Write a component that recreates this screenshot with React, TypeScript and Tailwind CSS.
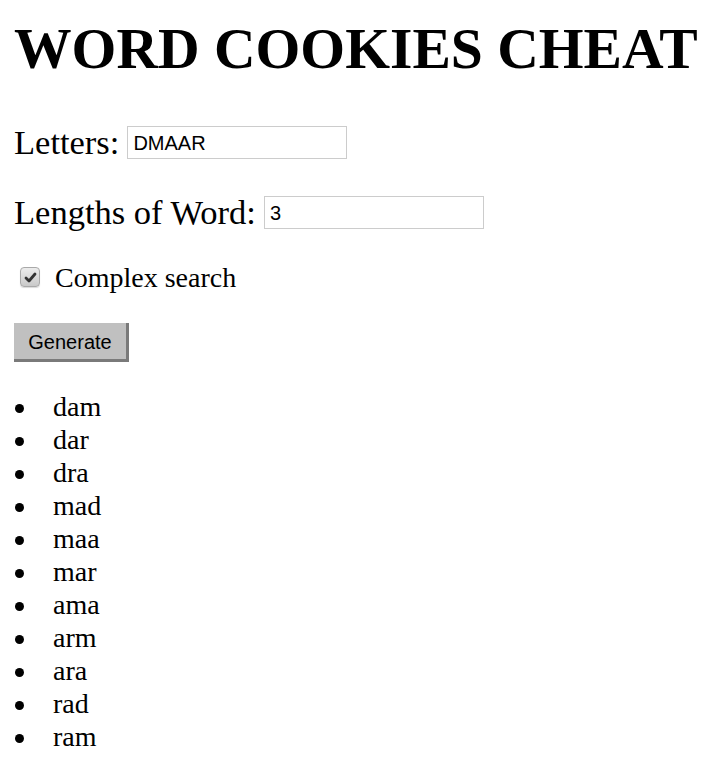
import { useState } from 'react';

const WORDS = ['dam', 'dar', 'dra', 'mad', 'maa', 'mar', 'ama', 'arm', 'ara', 'rad', 'ram'];

function App() {
  const [letters, setLetters] = useState('DMAAR');
  const [len, setLen] = useState('3');
  const [complex, setComplex] = useState(true);

  return (
    <div className="min-h-screen bg-white text-black px-[14px] font-['Liberation_Serif','Times_New_Roman',serif]">
      <h1 className="pt-[16px] text-[57.6px] leading-[66px] font-bold whitespace-nowrap">WORD COOKIES CHEAT</h1>

      {/* letters */}
      <div className="mt-[43px] flex items-center h-[34px]">
        <label className="text-[34.5px] leading-[34px]">Letters:</label>
        <input
          value={letters}
          onChange={(e) => setLetters(e.target.value)}
          className="ml-[8px] w-[220px] h-[33px] border border-[#cccccc] px-[5px] pt-[2px] text-[20px] text-black font-['Liberation_Sans',Arial,sans-serif] outline-none"
        />
      </div>

      {/* length */}
      <div className="mt-[36px] flex items-center h-[34px]">
        <label className="text-[34.5px] leading-[34px]">Lengths of Word:</label>
        <input
          value={len}
          onChange={(e) => setLen(e.target.value)}
          className="ml-[8px] w-[220px] h-[33px] border border-[#cccccc] px-[5px] pt-[2px] text-[20px] text-black font-['Liberation_Sans',Arial,sans-serif] outline-none"
        />
      </div>

      {/* checkbox */}
      <div className="mt-[38px] flex items-center h-[20px]">
        <button
          onClick={() => setComplex(!complex)}
          className="ml-[6px] w-[20px] h-[20px] rounded-[4px] border border-[#a9a9a9] bg-gradient-to-b from-[#ececec] to-[#c9c9c9] flex items-center justify-center shadow-[0_1px_1px_rgba(0,0,0,0.15)]"
        >
          {complex && (
            <svg width="13" height="13" viewBox="0 0 13 13">
              <path d="M2 7 L5 10 L11 3" fill="none" stroke="#333" strokeWidth="2.8" strokeLinecap="round" strokeLinejoin="round" />
            </svg>
          )}
        </button>
        <span className="ml-[15px] text-[28px] leading-[28px] pt-[2px]">Complex search</span>
      </div>

      {/* button */}
      <button className="mt-[36px] w-[115px] h-[39px] bg-[#c0c0c0] border-r-[3px] border-b-[3px] border-[#7a7a7a] pt-[2px] text-[20px] text-black font-['Liberation_Sans',Arial,sans-serif]">
        Generate
      </button>

      {/* results */}
      <ul className="mt-[28px] text-[28px] leading-[33px]">
        {WORDS.map((w) => (
          <li key={w} className="flex items-center">
            <span className="ml-[1px] mt-[3px] w-[9px] h-[9px] rounded-full bg-black" />
            <span className="ml-[29px]">{w}</span>
          </li>
        ))}
      </ul>
    </div>
  );
}

export default App;
